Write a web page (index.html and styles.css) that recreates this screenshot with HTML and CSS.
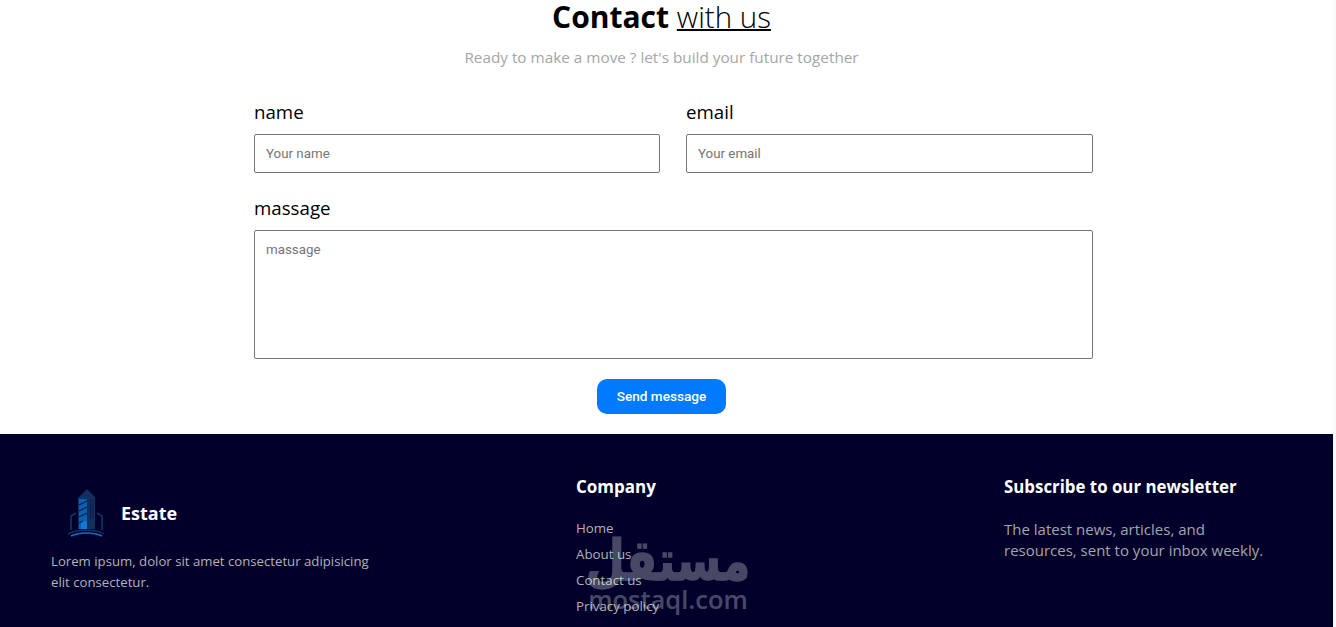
FILE: index.html
```html
<!doctype html>
<html lang="en">

<head>
    <meta charset="utf-8">
    <title>Contact with us</title>
    <link rel="stylesheet" href="styles.css">
</head>

<body>
    <div class="page">
        <section class="contact">
            <h1 class="title"><b>Contact</b> <span class="title-light">with us</span></h1>
            <p class="subtitle">Ready to make a move ? let's build your future together</p>

            <form class="form">
                <div class="form-row">
                    <label class="field">
                        <span class="field-label">name</span>
                        <input class="input" type="text" placeholder="Your name">
                    </label>
                    <label class="field">
                        <span class="field-label">email</span>
                        <input class="input" type="email" placeholder="Your email">
                    </label>
                </div>
                <label class="field">
                    <span class="field-label">massage</span>
                    <textarea class="input textarea" placeholder="massage"></textarea>
                </label>
            </form>

            <div class="actions">
                <button class="send" type="button">Send message</button>
            </div>
        </section>

        <footer class="footer">
            <div class="about">
                <div class="brand">
                    <svg class="logo" width="60" height="55" viewBox="0 0 60 55" fill="none">
                        <path d="M18 13 L27 4 L35 12 V44 H18 Z" fill="#10305f" />
                        <path d="M19 14 H27 V44 H19 Z" fill="#0b5fb0" />
                        <path d="M21 36 H27 V44 H21 Z" fill="#1079d6" />
                        <path d="M19 20 L27 16 M19 26 L27 22 M19 32 L27 28 M19 38 L23 36" stroke="#06234f" stroke-width="1.3" />
                        <path d="M30.5 14 V34 M33 14 V34" stroke="#0a1d4a" stroke-width="1" />
                        <path d="M16 28 L11 31 V45 M37 28 L42 31 V45" stroke="#10305f" stroke-width="1.8" />
                        <path d="M8 49 C16 44 37 44 44 49" stroke="#10305f" stroke-width="1.5" />
                        <path d="M11 51 C19 47 34 47 42 51" stroke="#0f6fc6" stroke-width="1.6" />
                    </svg>
                    <span class="brand-name">Estate</span>
                </div>
                <p class="about-text">Lorem ipsum, dolor sit amet consectetur adipisicing elit consectetur.</p>
            </div>

            <nav class="company">
                <h3 class="footer-title">Company</h3>
                <ul class="links">
                    <li><a href="#">Home</a></li>
                    <li><a href="#">About us</a></li>
                    <li><a href="#">Contact us</a></li>
                    <li><a href="#">Privacy policy</a></li>
                </ul>
            </nav>

            <div class="newsletter">
                <h3 class="footer-title footer-title-wide">Subscribe to our newsletter</h3>
                <p class="newsletter-text">The latest news, articles, and resources, sent to your inbox weekly.</p>
            </div>

            <div class="watermark">
                <span class="watermark-ar" dir="rtl">مستقل</span>
                <span class="watermark-en">mostaql.com</span>
            </div>
        </footer>
    </div>
</body>

</html>
```

FILE: styles.css
```css
* {
    box-sizing: border-box;
}

html,
body {
    height: 100%;
}

body {
    margin: 0;
    overflow: hidden;
    background: #fafafa;
    font-family: "Open Sans", "Noto Sans", sans-serif;
}

.page {
    width: 1333px;
    height: 627px;
    overflow: hidden;
    background: #fff;
}

.contact {
    height: 434px;
}

.title {
    margin: 0;
    padding-right: 10px;
    height: 34px;
    line-height: 34px;
    font-size: 30px;
    font-weight: 400;
    text-align: center;
    color: #000;
}

.title-light {
    font-size: 29.5px;
    font-weight: 300;
    text-decoration: underline;
    text-decoration-thickness: 2px;
}

.subtitle {
    margin: 11px 0 0;
    padding-right: 10px;
    height: 24px;
    line-height: 24px;
    font-size: 15.3px;
    text-align: center;
    color: #a6a6a6;
}

.form {
    width: 839px;
    margin: 30px 0 0 254px;
    display: flex;
    flex-direction: column;
    gap: 22px;
}

.form-row {
    display: grid;
    grid-template-columns: 406px 407px;
    gap: 26px;
}

.field {
    display: flex;
    flex-direction: column;
    gap: 8px;
}

.field-label {
    height: 27px;
    line-height: 25px;
    font-size: 18.7px;
    color: #000;
}

.input {
    display: block;
    width: 100%;
    height: 39px;
    padding: 0 11px;
    border: 1px solid #767676;
    border-radius: 2px;
    background: #fff;
    font-family: Roboto, sans-serif;
    font-size: 13.33px;
    outline: none;
}

.input::placeholder {
    color: #757575;
    opacity: 1;
}

.textarea {
    height: 129px;
    padding: 11px;
    resize: none;
}

.actions {
    margin-top: 20px;
    padding-right: 10px;
    display: flex;
    justify-content: center;
}

.send {
    width: 129px;
    height: 35px;
    padding: 0 0 2px;
    border: 0;
    border-radius: 10px;
    background: #007bff;
    color: #fff;
    font-family: Roboto, sans-serif;
    font-size: 13.6px;
    font-weight: 500;
}

.footer {
    position: relative;
    height: 193px;
    padding-left: 51px;
    display: grid;
    grid-template-columns: 525px 428px 1fr;
    background: #00002b;
    color: #fff;
}

.brand {
    margin: 51px 0 0 9px;
    height: 55px;
    display: flex;
    align-items: center;
    gap: 1px;
}

.brand-name {
    font-size: 18px;
    font-weight: 700;
}

.about-text {
    margin: 11px 0 0;
    width: 330px;
    font-size: 13.2px;
    line-height: 21px;
    color: #b3b3b3;
}

.footer-title {
    margin: 39px 0 0;
    height: 27px;
    line-height: 27px;
    font-size: 17px;
    font-weight: 700;
}

.footer-title-wide {
    font-size: 16.85px;
}

.links {
    margin: 18px 0 0;
    padding: 0;
    list-style: none;
    display: flex;
    flex-direction: column;
    gap: 6px;
}

.links li {
    height: 20px;
    line-height: 20px;
    font-size: 13.3px;
}

.links a {
    color: #b3b3b3;
    text-decoration: none;
}

.newsletter-text {
    margin: 19px 0 0;
    width: 275px;
    font-size: 15px;
    line-height: 21px;
    color: #a6a6a6;
}

.watermark {
    position: absolute;
    left: 587px;
    top: 103px;
    width: 162px;
    display: flex;
    flex-direction: column;
    align-items: center;
    color: #fff;
    pointer-events: none;
}

.watermark-ar {
    height: 47px;
    line-height: 47px;
    font-family: "DejaVu Sans", sans-serif;
    font-size: 45px;
    font-weight: 700;
    opacity: 0.28;
    -webkit-text-stroke: 1px #fff;
    transform: scaleY(1.25);
}

.watermark-en {
    height: 30px;
    line-height: 30px;
    font-family: "Open Sans", sans-serif;
    font-size: 25.5px;
    font-weight: 600;
    opacity: 0.28;
}
```
